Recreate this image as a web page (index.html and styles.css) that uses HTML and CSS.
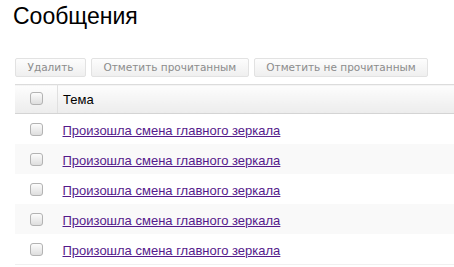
FILE: index.html
```html
<!DOCTYPE html>
<html>
<head>
<meta charset="UTF-8">
<title>Сообщения</title>
<link rel="stylesheet" href="styles.css">
</head>
<body>
	<h1>Сообщения</h1>

	<div class="toolbar">
		<button class="btn">Удалить</button>
		<button class="btn">Отметить прочитанным</button>
		<button class="btn">Отметить не прочитанным</button>
	</div>

	<table class="messages">
		<thead>
			<tr>
				<th class="check"><input type="checkbox" /></th>
				<th>Тема</th>
			</tr>
		</thead>
		<tbody>
			<tr>
				<td class="check"><input type="checkbox" /></td>
				<td><a href="#">Произошла смена главного зеркала</a></td>
			</tr>
			<tr class="odd">
				<td class="check"><input type="checkbox" /></td>
				<td><a href="#">Произошла смена главного зеркала</a></td>
			</tr>
			<tr>
				<td class="check"><input type="checkbox" /></td>
				<td><a href="#">Произошла смена главного зеркала</a></td>
			</tr>
			<tr class="odd">
				<td class="check"><input type="checkbox" /></td>
				<td><a href="#">Произошла смена главного зеркала</a></td>
			</tr>
			<tr>
				<td class="check"><input type="checkbox" /></td>
				<td><a href="#">Произошла смена главного зеркала</a></td>
			</tr>
		</tbody>
	</table>
</body>
</html>
```

FILE: styles.css
```css
body {
margin:0;
padding:0 0 0 15px;
font-family:"Liberation Sans", Arial, sans-serif;
font-size:13px;
color:#000;
background:#fff;
overflow:hidden;
}
h1 {
margin:0;
padding:3px 0 0 0;
margin-left:-2px;
font-size:23px;
font-weight:normal;
line-height:27px;
}
.toolbar {
display:flex;
gap:5px;
margin-top:28px;
}
.btn {
height:19px;
padding:0 11.5px;
border:1px solid #e2e2e2;
border-radius:2px;
background:linear-gradient(#fdfdfd, #efefef);
color:#8c8c8c;
font-family:"DejaVu Sans", Verdana, sans-serif;
font-size:10.5px;
line-height:17px;
}
.messages {
border-collapse:collapse;
width:440px;
margin-top:7px;
}
.messages th {
height:28px;
padding:0;
text-align:left;
font-weight:normal;
background:linear-gradient(#fdfdfd, #ececec);
border-top:1px solid #dcdcdc;
border-bottom:1px solid #d4d4d4;
}
.messages th.check {
border-right:1px solid #e0e0e0;
}
.messages td {
height:28px;
padding:2px 0 0 0;
}
.messages tbody tr:last-child td {
border-bottom:1px solid #f0f0f0;
}
.messages tr.odd td {
background:#f9f9f9;
}
.messages .check {
width:42px;
text-align:center;
}
.messages th + th,
.messages td + td {
padding-left:5px;
}
input[type=checkbox] {
appearance:none;
-webkit-appearance:none;
display:block;
margin:0 auto;
width:13px;
height:13px;
border:1px solid #b3b3b3;
border-radius:3px;
background:linear-gradient(#fcfcfc, #dedede);
position:relative;
top:-1px;
}
a {
color:#551a8b;
}
```
